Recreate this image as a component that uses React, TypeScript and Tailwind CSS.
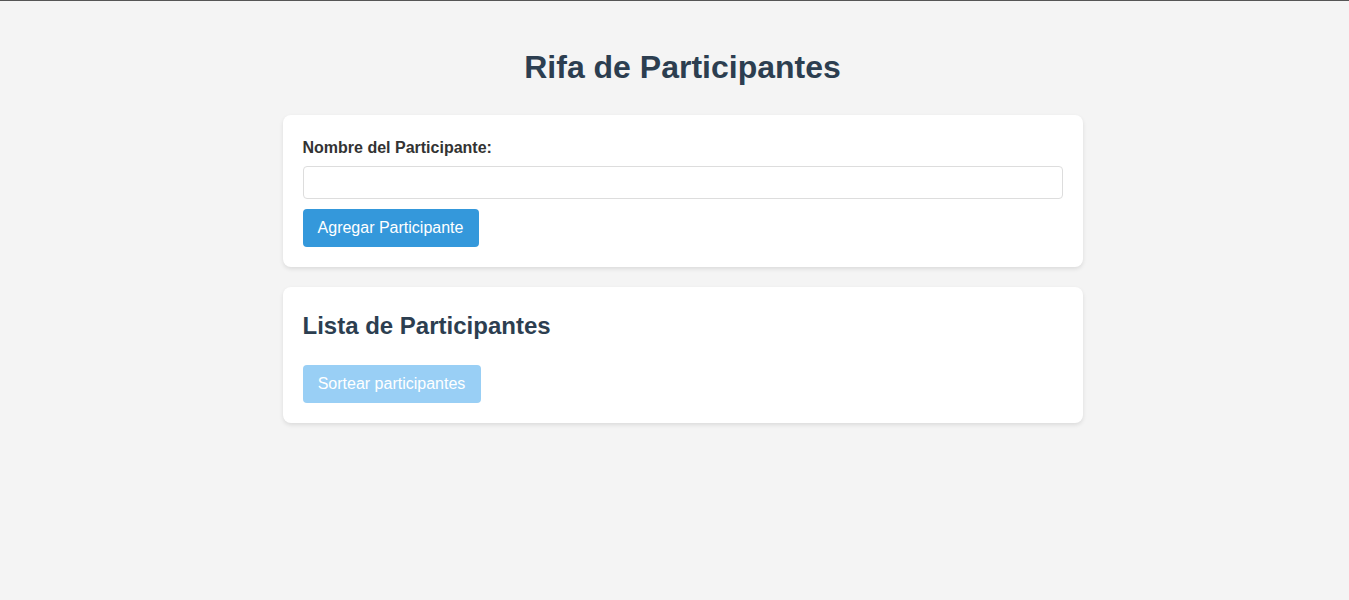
import React, { useState } from 'react';

const font = "font-['Liberation_Sans',Arial,sans-serif]";

const App = () => {
  const [name, setName] = useState('');
  const [participants, setParticipants] = useState<string[]>([]);

  const addParticipant = () => {
    if (!name.trim()) return;
    setParticipants([...participants, name.trim()]);
    setName('');
  };

  return (
    <div className={`min-h-[600px] bg-[#f4f4f4] border-t border-[#555] pl-4 ${font}`}>
      <div className="w-[800px] mx-auto pt-[48px]">
        <h1 className="text-[32px] leading-[37px] font-bold text-[#2c3e50] text-center mb-[29px]">
          Rifa de Participantes
        </h1>

        <div className="bg-white rounded-lg shadow-[0_2px_4px_rgba(0,0,0,0.1)] p-5 mb-5">
          <label className="block text-base leading-[18px] font-bold text-[#333] mt-[4px] mb-[9px]">
            Nombre del Participante:
          </label>
          <input
            type="text"
            value={name}
            onChange={(e) => setName(e.target.value)}
            className="block w-full h-[33px] border border-[#ddd] rounded px-2 text-base outline-none"
          />
          <button
            onClick={addParticipant}
            className="mt-[10px] h-[38px] w-[176px] bg-[#3498db] text-white text-base rounded">
            Agregar Participante
          </button>
        </div>

        <div className="bg-white rounded-lg shadow-[0_2px_4px_rgba(0,0,0,0.1)] p-5">
          <h2 className="text-2xl leading-[28px] font-bold text-[#2c3e50] mt-[5px] mb-[25px]">
            Lista de Participantes
          </h2>
          {participants.length > 0 && (
            <ul className="mb-4">
              {participants.map((p, i) => (
                <li key={i} className="text-[#333] py-1">{p}</li>
              ))}
            </ul>
          )}
          <button
            disabled={participants.length === 0}
            className="block h-[38px] w-[178px] bg-[#3498db] disabled:bg-[#99cff5] text-white text-base rounded">
            Sortear participantes
          </button>
        </div>
      </div>
    </div>
  );
};

export default App;
